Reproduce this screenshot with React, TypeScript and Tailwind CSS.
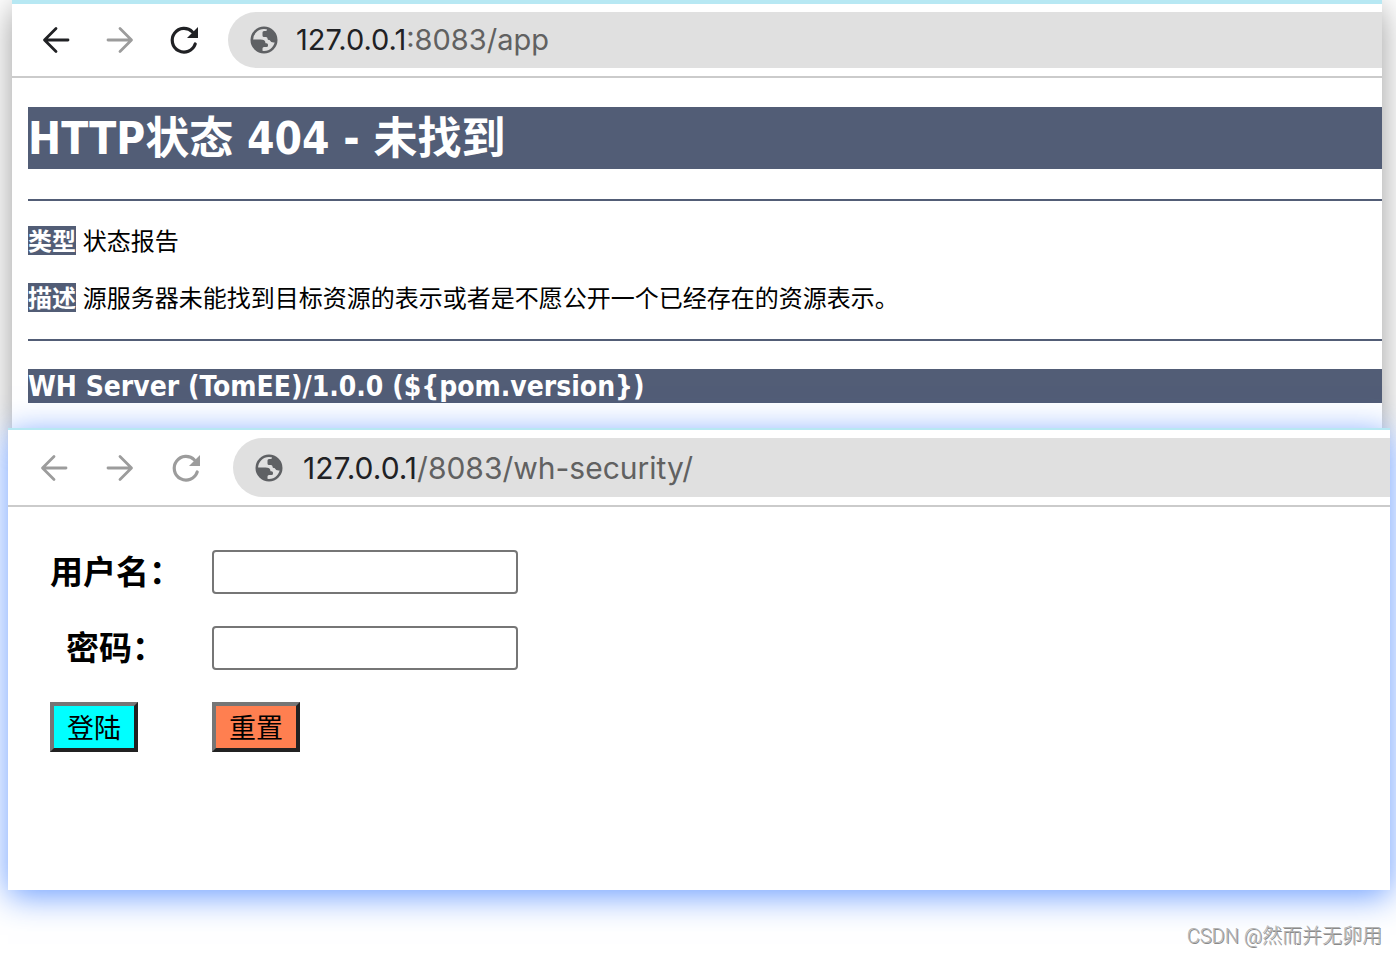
import { useState } from 'react';

interface AddressBarProps {
    host: string;
    path: string;
    active?: boolean;
}

function BackIcon() {
    return (
        <svg className="w-8 h-8" fill="none" stroke="currentColor" viewBox="0 0 32 32">
            <path strokeWidth={2.8} strokeLinecap="round" strokeLinejoin="round" d="M28 16H5M16 4.500L4.500 16L16 27.500" />
        </svg>
    );
}

function ForwardIcon() {
    return (
        <svg className="w-8 h-8" fill="none" stroke="currentColor" viewBox="0 0 32 32">
            <path strokeWidth={2.8} strokeLinecap="round" strokeLinejoin="round" d="M4 16H27M16 4.500L27.500 16L16 27.500" />
        </svg>
    );
}

function ReloadIcon() {
    return (
        <svg className="w-8 h-8" fill="none" viewBox="0 0 32 32">
            <path stroke="currentColor" strokeWidth={3.2} strokeLinecap="round" d="M27.200 20A11.800 11.800 0 1 1 24.500 8" />
            <path fill="currentColor" d="M30 3V14H19Z" />
        </svg>
    );
}

function GlobeIcon() {
    return (
        <svg className="w-8 h-8 text-[#5f6164]" fill="none" viewBox="0 0 32 32">
            <circle cx="16" cy="16" r="12.200" stroke="currentColor" strokeWidth={2.6} />
            <path
                fill="currentColor"
                d="M3.500 15.500H12.500C15.500 15.500 17.500 16.500 17.500 19.200H18.500Q20 19.200 20 20.700V21.500Q20 23 18.500 23H16Q14.500 23 14.500 24.500V28.500C8 28 3.500 23 3.500 15.500Z"
            />
            <path
                fill="currentColor"
                d="M19 4V5.500Q19 7 17.500 7H16Q14.500 7 14.500 8.500V11.500Q14.500 13 16 13H18Q19.500 13 19.500 14.500Q19.500 16 21 16H21.500Q23 18.500 25.500 18.500H28.500C29.500 11 26 5.500 19 4Z"
            />
        </svg>
    );
}

function AddressBar({ host, path, active = false }: AddressBarProps) {
    return (
        <div className={`flex items-center py-2 border-b-2 border-[#cbcbcb] bg-white ${active ? 'pl-7' : 'pl-[30px]'}`}>
            <div className={`flex ${active ? 'gap-8 text-[#202124]' : 'gap-[34px] text-[#9c9c9c]'}`}>
                <button type="button" aria-label="Back"><BackIcon /></button>
                <button type="button" aria-label="Forward" className="text-[#9c9c9c]"><ForwardIcon /></button>
                <button type="button" aria-label="Reload"><ReloadIcon /></button>
            </div>
            <div className={`flex flex-1 items-center rounded-l-full bg-[#e0e0e0] pl-5 ${active ? 'ml-7 h-14 gap-4' : 'ml-[31px] h-[59px] gap-[18px]'}`}>
                <GlobeIcon />
                <a
                    href="#"
                    className={`font-['Inter',sans-serif] leading-10 text-[#616161] ${active ? 'text-[29px]' : 'text-[30px]'}`}
                >
                    <span className="text-[#202124]">{host}</span>{path}
                </a>
            </div>
        </div>
    );
}

function ErrorPage() {
    return (
        <section className="ml-3 mr-3.5 border-t-4 border-[#b7e8f3] bg-white shadow-[0_8px_32px_#00000066]">
            <AddressBar host="127.0.0.1" path=":8083/app" active />
            <div className="ml-4 pt-[29px] pb-[25px] font-['DejaVu_Sans_Condensed','Noto_Sans_CJK_SC',sans-serif] text-[24px] leading-[25px] text-black">
                <h1 className="bg-[#525d76] pt-0.5 text-[44px] leading-[60px] font-bold text-white">HTTP状态 404 - 未找到</h1>
                <hr className="mt-[30px] border-t-2 border-[#525d76]" />
                <p className="mt-[25px]"><b className="bg-[#525d76] inline-block pt-1 text-white">类型</b> 状态报告</p>
                <p className="mt-7"><b className="bg-[#525d76] inline-block pt-1 text-white">描述</b> 源服务器未能找到目标资源的表示或者是不愿公开一个已经存在的资源表示。</p>
                <hr className="mt-[27px] border-t-2 border-[#525d76]" />
                <h3 className="mt-7 bg-[#525d76] pt-0.5 text-[28px] leading-8 font-bold text-white">{'WH Server (TomEE)/1.0.0 (${pom.version})'}</h3>
            </div>
        </section>
    );
}

function LoginPage() {
    const [username, setUsername] = useState('');
    const [password, setPassword] = useState('');

    const reset = () => {
        setUsername('');
        setPassword('');
    };

    return (
        <section className="relative ml-2 mr-1.5 border-t-2 border-[#b7e8f3] bg-white shadow-[0_6px_32px_#1f6bffaa]">
            <AddressBar host="127.0.0.1" path="/8083/wh-security/" />
            <form
                onSubmit={(e) => e.preventDefault()}
                className="grid w-fit grid-cols-[130px_306px] gap-8 pl-[42px] pt-[43px] pb-[138px] font-['Noto_Sans_CJK_SC',sans-serif] text-black"
            >
                <label htmlFor="username" className="text-[33px] leading-10 font-bold whitespace-nowrap">用户名：</label>
                <input
                    id="username"
                    type="text"
                    value={username}
                    onChange={(e) => setUsername(e.target.value)}
                    className="h-11 rounded-sm border-2 border-[#767676] bg-white px-2 text-[28px]"
                />
                <label htmlFor="password" className="pl-4 text-[33px] leading-10 font-bold whitespace-nowrap">密码：</label>
                <input
                    id="password"
                    type="password"
                    value={password}
                    onChange={(e) => setPassword(e.target.value)}
                    className="h-11 rounded-sm border-2 border-[#767676] bg-white px-2 text-[28px]"
                />
                <button type="submit" className="w-[88px] border-4 border-[#767676] border-r-[#212121] border-b-[#212121] bg-[#00ffff] text-[27px] leading-[42px]">
                    登陆
                </button>
                <button type="button" onClick={reset} className="w-[88px] border-4 border-[#767676] border-r-[#212121] border-b-[#212121] bg-[#ff7f50] text-[27px] leading-[42px]">
                    重置
                </button>
            </form>
        </section>
    );
}

function App() {
    return (
        <main className="min-h-screen overflow-hidden bg-white">
            <ErrorPage />
            <LoginPage />
            <footer className="relative pt-8 pr-3.5 text-right font-['Roboto','Noto_Sans_CJK_SC',sans-serif] text-[20px] leading-7 font-light text-[#b4b4b4] [text-shadow:1px_1px_0_#8a8a8a]">
                CSDN @然而并无卵用
            </footer>
        </main>
    );
}

export default App;
